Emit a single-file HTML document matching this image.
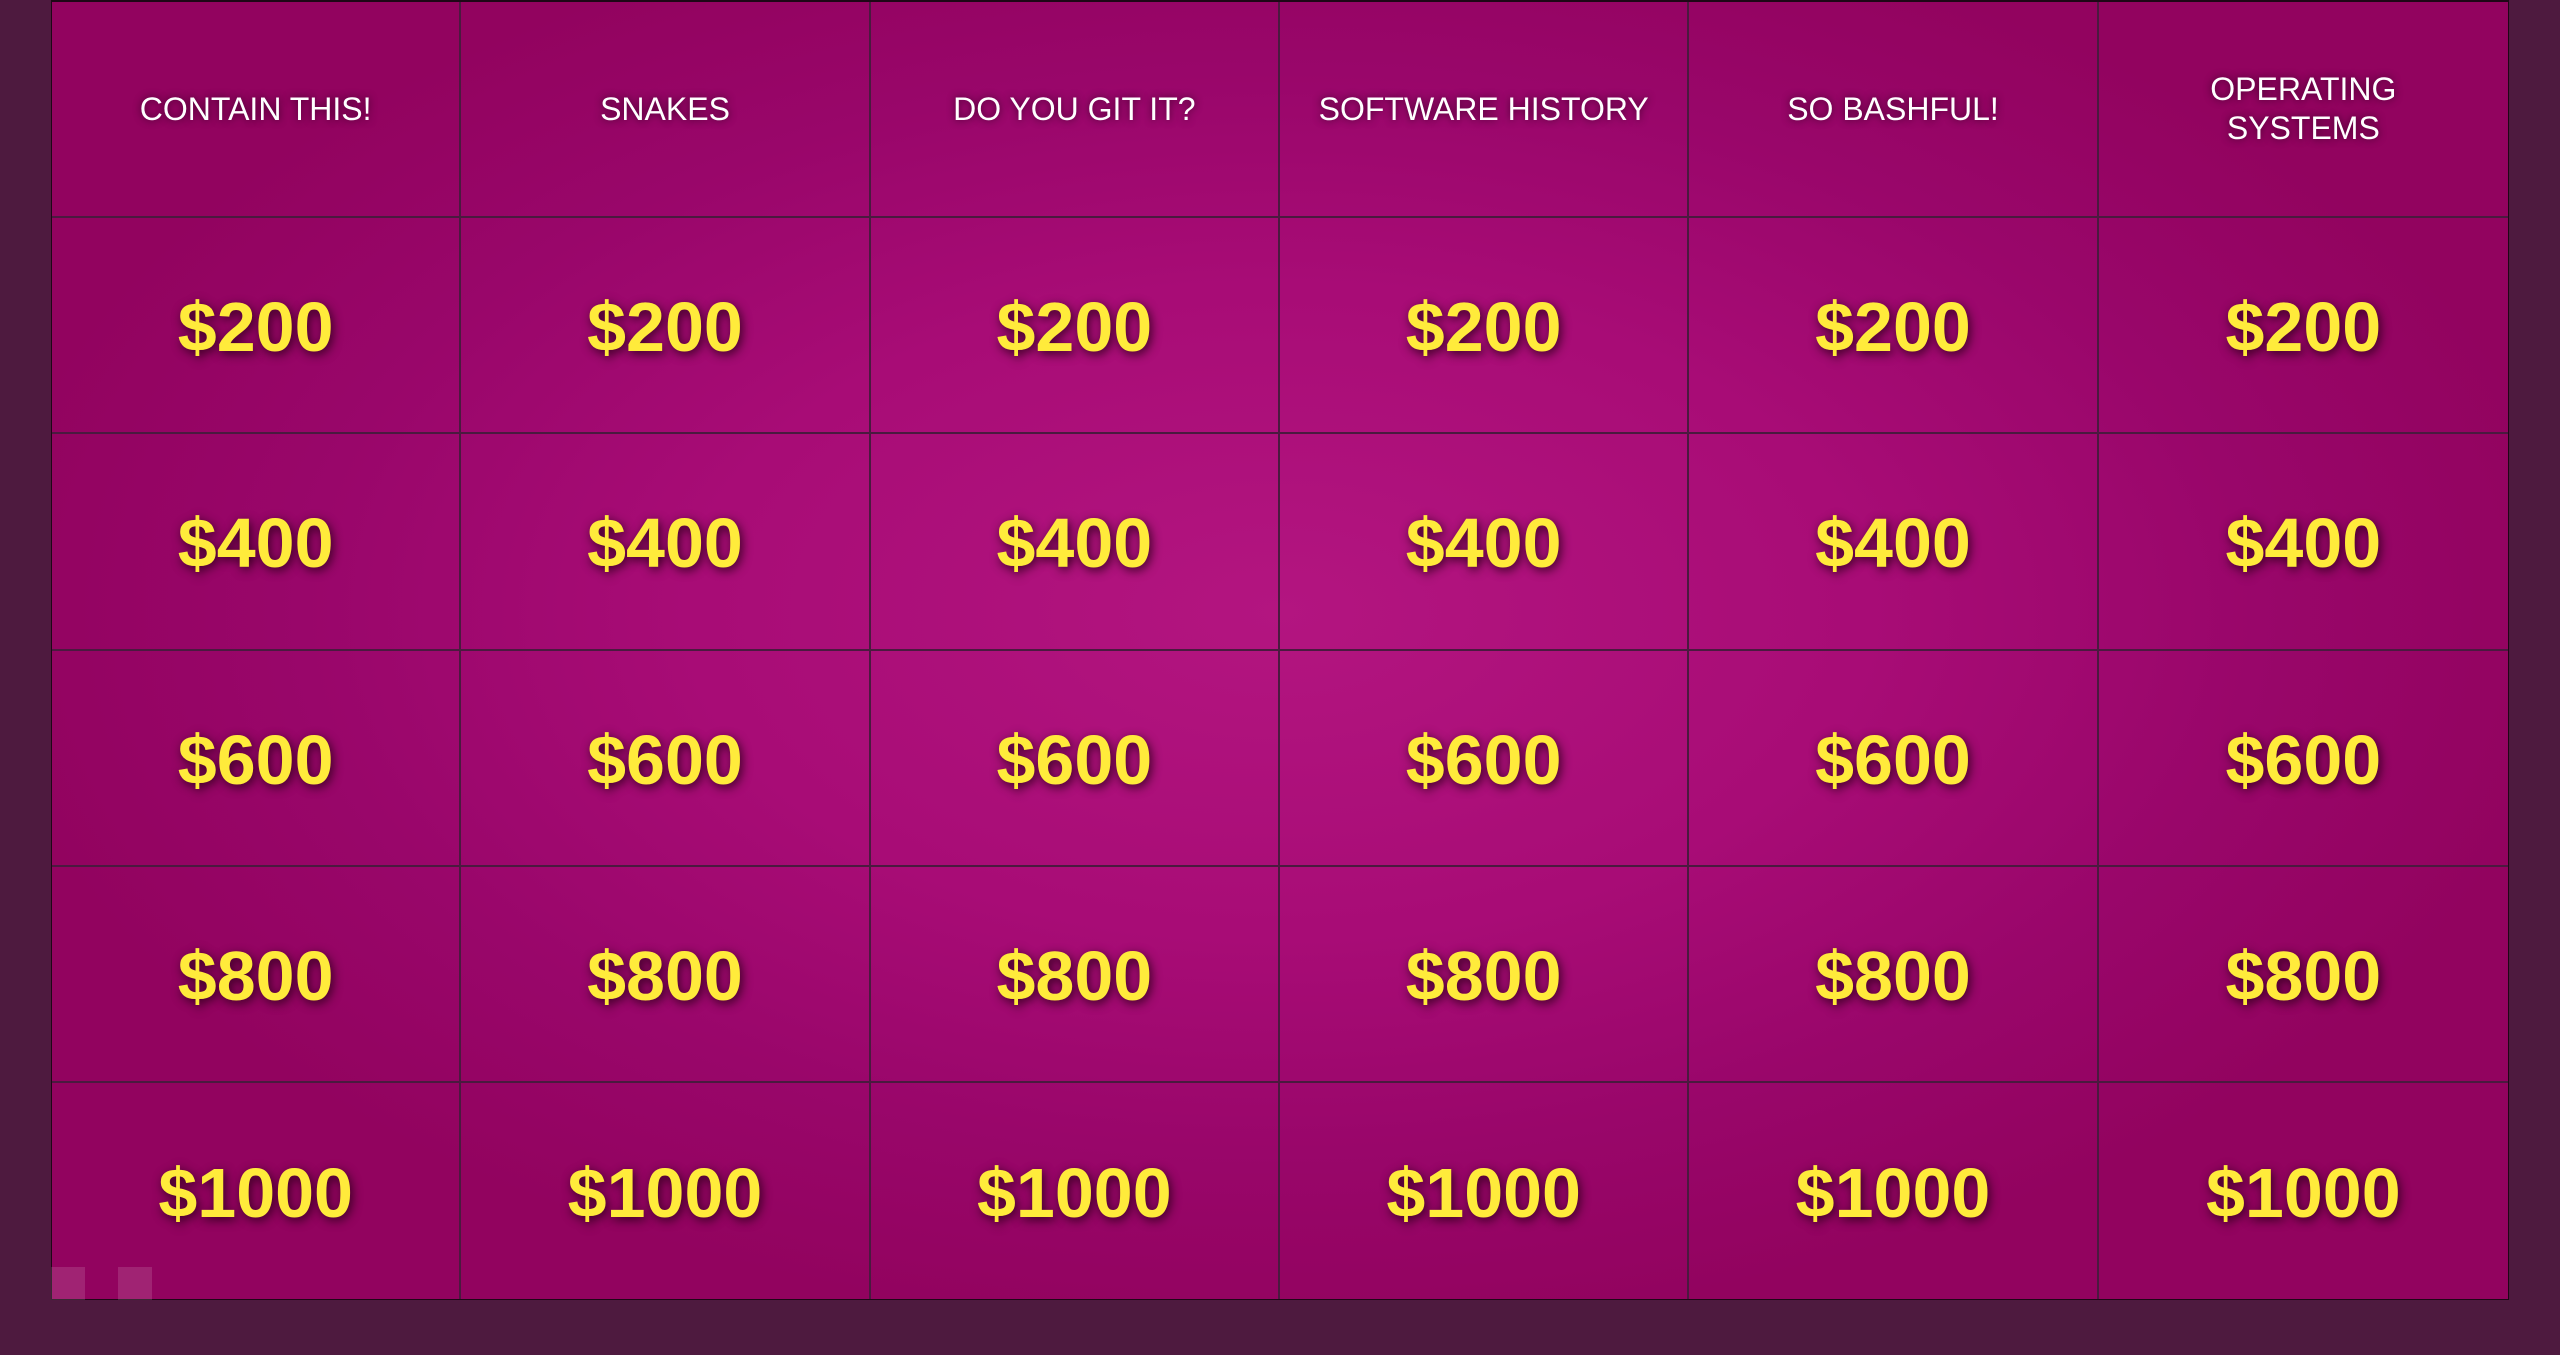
<!DOCTYPE html>
<html><head><meta charset="utf-8"><style>
html,body{margin:0;padding:0;width:2560px;height:1355px;overflow:hidden;background:#4e1a3f;}
.board{position:absolute;left:51px;top:0;width:2458px;height:1300px;box-sizing:border-box;border:1.5px solid #1e0716;border-top:2px solid #1e0716;
background:radial-gradient(ellipse 1300px 720px at 50% 47%,#b31580 0%,#a80c76 45%,#99066a 75%,#92035f 100%);
display:grid;grid-template-columns:repeat(6,1fr);grid-template-rows:repeat(6,1fr);}
.c{border-right:2px solid #4a1a3f;border-bottom:2px solid #4a1a3f;display:flex;align-items:center;justify-content:center;text-align:center;box-sizing:border-box;}
.c:nth-child(6n){border-right:none}
.c:nth-child(n+31){border-bottom:none}
.h{color:#fff;font-family:"Liberation Sans",sans-serif;font-size:32px;line-height:39px;text-shadow:0 0 8px rgba(50,0,35,.9);}
.m{color:#ffeb3b;font-family:"Liberation Sans",sans-serif;font-weight:bold;font-size:70px;text-shadow:2px 3px 10px rgba(50,0,30,.95);padding-top:4px;}
.sq{position:absolute;width:34px;height:33px;top:1267px;background:rgba(255,255,255,.13);}
</style></head><body>
<div class="board">
<div class="c h">CONTAIN THIS!</div><div class="c h">SNAKES</div><div class="c h">DO YOU GIT IT?</div><div class="c h">SOFTWARE HISTORY</div><div class="c h">SO BASHFUL!</div><div class="c h">OPERATING<br>SYSTEMS</div>
<div class="c m">$200</div><div class="c m">$200</div><div class="c m">$200</div><div class="c m">$200</div><div class="c m">$200</div><div class="c m">$200</div>
<div class="c m">$400</div><div class="c m">$400</div><div class="c m">$400</div><div class="c m">$400</div><div class="c m">$400</div><div class="c m">$400</div>
<div class="c m">$600</div><div class="c m">$600</div><div class="c m">$600</div><div class="c m">$600</div><div class="c m">$600</div><div class="c m">$600</div>
<div class="c m">$800</div><div class="c m">$800</div><div class="c m">$800</div><div class="c m">$800</div><div class="c m">$800</div><div class="c m">$800</div>
<div class="c m">$1000</div><div class="c m">$1000</div><div class="c m">$1000</div><div class="c m">$1000</div><div class="c m">$1000</div><div class="c m">$1000</div>
</div>
<div class="sq" style="left:51px"></div><div class="sq" style="left:118px"></div>
</body></html>
